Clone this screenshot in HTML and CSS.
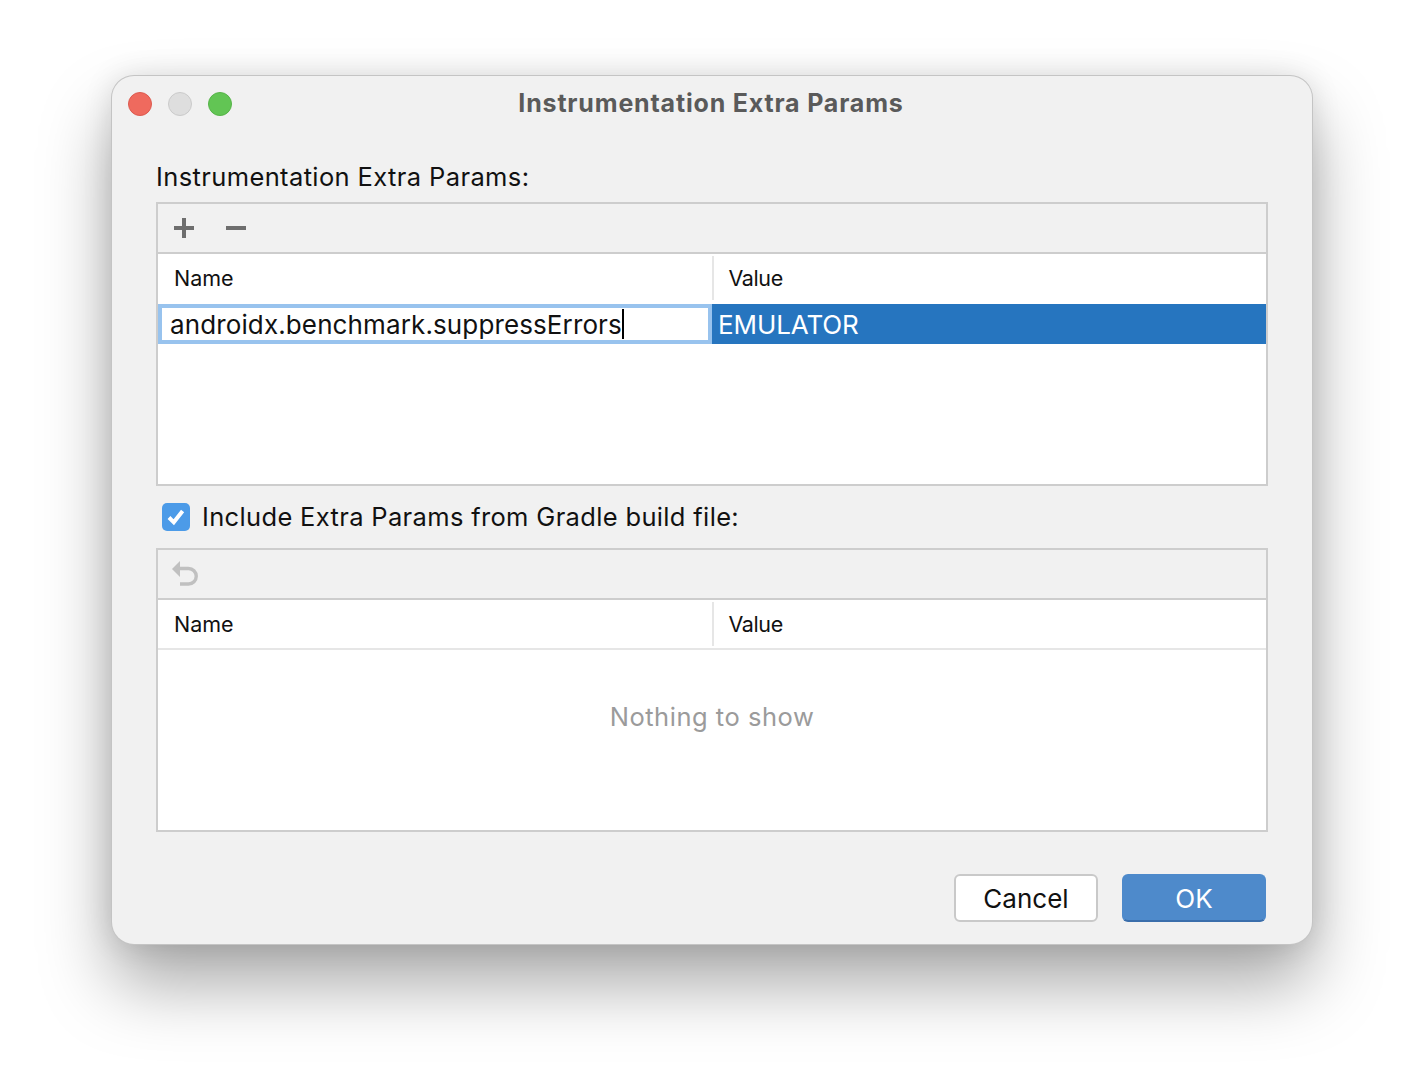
FILE: index.html
```html
<!DOCTYPE html>
<html lang="en">
<head>
<meta charset="utf-8">
<title>Instrumentation Extra Params</title>
<link rel="stylesheet" href="styles.css">
</head>
<body>
<div class="window">
  <header class="titlebar">
    <div class="lights">
      <span class="light red"></span>
      <span class="light grey"></span>
      <span class="light green"></span>
    </div>
    <div class="title">Instrumentation Extra Params</div>
  </header>
  <main class="content">
    <div class="label">Instrumentation Extra Params:</div>
    <section class="panel">
      <div class="toolbar">
        <svg class="icon" width="24" height="24" viewBox="0 0 24 24"><path d="M10 2h4v8h8v4h-8v8h-4v-8H2v-4h8z" fill="#6e6e6e"/></svg>
        <svg class="icon" width="24" height="24" viewBox="0 0 24 24"><rect x="2" y="10" width="20" height="4" fill="#6e6e6e"/></svg>
      </div>
      <div class="thead">
        <div class="th name">Name</div>
        <div class="th value">Value</div>
      </div>
      <div class="row">
        <div class="editor"><span class="editor-text">androidx.benchmark.suppressErrors</span><span class="caret"></span></div>
        <div class="selected">EMULATOR</div>
      </div>
      <div class="fill"></div>
    </section>
    <div class="check-row">
      <span class="checkbox">
        <svg width="28" height="28" viewBox="0 0 28 28"><path d="M7 14.5l4.8 4.8 8.8-11.3" fill="none" stroke="#fff" stroke-width="4"/></svg>
      </span>
      <span class="check-label">Include Extra Params from Gradle build file:</span>
    </div>
    <section class="panel">
      <div class="toolbar">
        <svg class="icon" width="28" height="28" viewBox="0 0 28 28"><path d="M6 8.5h10.5a7.75 7.75 0 0 1 0 15.5H8" fill="none" stroke="#c0c0c0" stroke-width="3.4"/><path d="M8 1v16L0 9z" fill="#c0c0c0"/></svg>
      </div>
      <div class="thead bordered">
        <div class="th name">Name</div>
        <div class="th value">Value</div>
      </div>
      <div class="empty">Nothing to show</div>
    </section>
    <footer class="buttons">
      <button class="btn cancel">Cancel</button>
      <button class="btn ok">OK</button>
    </footer>
  </main>
</div>
</body>
</html>
```

FILE: styles.css
```css
* { box-sizing: border-box; }
html, body { margin: 0; height: 100%; background: #fff; overflow: hidden; }
body { font-family: Inter, "Liberation Sans", sans-serif; color: #111; padding: 76px 112px 0; }
.window {
  width: 1200px; height: 868px;
  background: #f1f1f1;
  border-radius: 22px;
  box-shadow: 0 0 0 1px #c4c4c4, 0 40px 70px rgba(0,0,0,.34), 0 0 30px rgba(0,0,0,.12);
}
.titlebar { height: 56px; position: relative; display: flex; align-items: center; justify-content: center; }
.lights { position: absolute; left: 16px; top: 16px; display: flex; gap: 16px; }
.light { width: 24px; height: 24px; border-radius: 50%; border: 1px solid; }
.red { background: #ef6a5e; border-color: #dd5a4f; }
.grey { background: #dedede; border-color: #cbcbcb; }
.green { background: #62c554; border-color: #56b448; }
.title { font-size: 25px; font-weight: 700; color: #5a5a5a; margin-top: -2px; letter-spacing: .82px; margin-left: -2px; }
.content { padding: 29px 44px 0; }
.label { font-size: 25.5px; height: 41px; line-height: 32px; letter-spacing: .38px; }
.panel { height: 284px; border: 2px solid #cdcdcd; background: #fff; display: flex; flex-direction: column; }
.toolbar { height: 50px; flex: none; background: #f1f1f1; border-bottom: 2px solid #cdcdcd; display: flex; align-items: center; gap: 28px; padding-left: 14px; }
.icon { display: block; flex: none; }
.thead { height: 50px; flex: none; display: flex; padding-top: 2px; }
.thead.bordered { border-bottom: 2px solid #e6e6e6; }
.th { font-size: 21.5px; display: flex; align-items: center; padding-left: 15px; height: 44px; margin-bottom: 2px; }
.th.name { width: 556px; padding-left: 16px; border-right: 2px solid #e6e6e6; }
.th.value { letter-spacing: -.4px; padding-left: 14.5px; }
.row { height: 40px; flex: none; display: flex; }
.editor { width: 554px; border: 4px solid #98c3ee; display: flex; align-items: center; padding-left: 8px; background: #fff; font-size: 26px; letter-spacing: .12px; }
.caret { width: 2px; height: 30px; background: #000; }
.selected { flex: 1; background: #2675bf; color: #fff; font-size: 26px; padding-left: 6px; display: flex; align-items: center; letter-spacing: -.1px; }
.fill { flex: 1; }
.check-row { height: 60px; margin-bottom: 2px; display: flex; align-items: center; padding-left: 6px; gap: 12px; }
.checkbox { width: 28px; height: 28px; border-radius: 5px; background: #4c9be8; display: block; margin-top: 2px; }
.checkbox svg { display: block; }
.check-label { font-size: 25.5px; letter-spacing: .34px; }
.empty { flex: 1; text-align: center; font-size: 25.5px; letter-spacing: .52px; color: #9b9b9b; padding-top: 50px; line-height: 34px; }
.buttons { display: flex; justify-content: flex-end; gap: 24px; margin-top: 42px; padding-right: 2px; }
.btn { width: 144px; height: 48px; border-radius: 6px; font-family: inherit; font-size: 26px; padding: 0; }
.cancel { background: #fff; border: 2px solid #c9c9c9; color: #111; }
.ok { background: #4e8acb; border: 2px solid #4e8acb; border-bottom-color: #3a6eab; color: #fff; }
```
